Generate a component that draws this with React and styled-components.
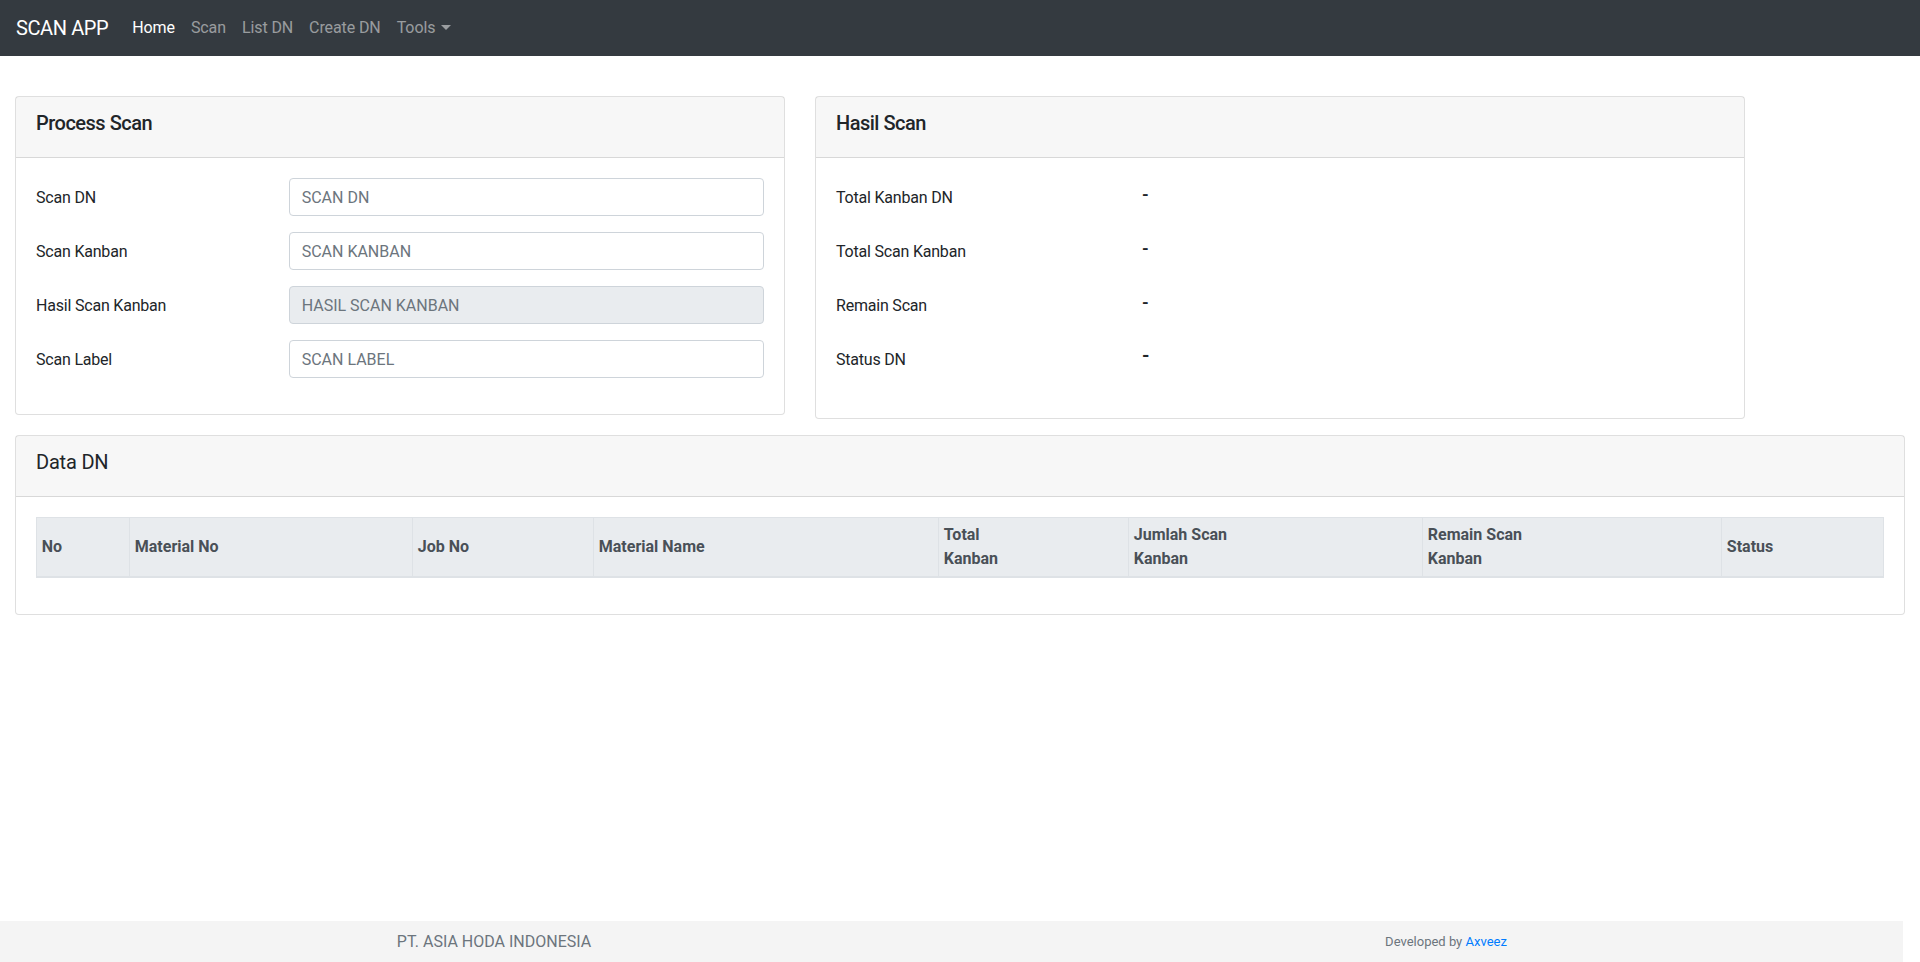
import React from 'react'
import styled, { createGlobalStyle } from 'styled-components'

const GlobalStyle = createGlobalStyle`
    * { box-sizing: border-box; }
    body {
        margin: 0;
        background: #fff;
        color: #212529;
        font-family: "Segoe UI", Roboto, "Helvetica Neue", Arial, "Liberation Sans", sans-serif;
        font-size: 16px;
        line-height: 1.5;
    }
`

const Page = styled.div`
    min-height: 100vh;
    display: flex;
    flex-direction: column;
`

const Navbar = styled.nav`
    height: 56px;
    background: #343a40;
    display: flex;
    align-items: center;
    padding: 0 16px;
`

const Brand = styled.a`
    color: #fff;
    font-size: 20px;
    line-height: 30px;
    letter-spacing: -0.4px;
    margin-right: 16px;
    text-decoration: none;
`

const NavLink = styled.a`
    color: ${p => (p.$active ? '#fff' : 'rgba(255,255,255,.5)')};
    padding: 8px;
    font-size: 16px;
    letter-spacing: -0.1px;
    text-decoration: none;
    display: flex;
    align-items: center;
`

const Caret = styled.span`
    display: inline-block;
    margin-left: 6px;
    border-top: 5px solid rgba(255,255,255,.5);
    border-left: 5px solid transparent;
    border-right: 5px solid transparent;
    margin-top: -2px;
`

const Main = styled.main`
    flex: 1;
    padding: 40px 15px 0;
`

const Grid = styled.div`
    display: grid;
    grid-template-columns: repeat(12, 1fr);
    column-gap: 30px;
    row-gap: 16px;
    align-items: start;
`

const Card = styled.section`
    grid-column: span ${p => p.$span};
    border: 1px solid rgba(0,0,0,.125);
    border-radius: 4px;
    background: #fff;
`

const CardHeader = styled.div`
    background: rgba(0,0,0,.03);
    border-bottom: 1px solid rgba(0,0,0,.125);
    padding: 14px 20px;
`

const CardTitle = styled.h5`
    margin: 0 0 8px;
    font-size: 20px;
    line-height: 1.2;
    letter-spacing: ${p => (p.$weight === 400 ? '-0.2px' : '-0.5px')};
    font-weight: ${p => p.$weight || 500};
    color: #212529;
`

const CardBody = styled.div`
    padding: 20px 20px ${p => p.$bottom || 20}px;
`

const FormRow = styled.div`
    display: grid;
    grid-template-columns: calc((100% + 30px) / 3 - 30px) 1fr;
    column-gap: 30px;
    margin-bottom: 16px;
`

const Label = styled.label`
    padding: 8px 0 6px;
    font-size: 16px;
    line-height: 24px;
    letter-spacing: -0.2px;
    color: #212529;
`

const Input = styled.input`
    height: 38px;
    width: 100%;
    padding: 6px 12px;
    font-family: inherit;
    font-size: 16px;
    line-height: 24px;
    color: #495057;
    background: ${p => (p.disabled ? '#e9ecef' : '#fff')};
    border: 1px solid #ced4da;
    border-radius: 4px;
    outline: none;

    &::placeholder {
        color: #6c757d;
        opacity: 1;
    }
`

const Value = styled.div`
    padding: 4px 0 10px;
    font-size: ${p => (p.$big ? 19 : 17)}px;
    line-height: 24px;
    font-weight: 700;
    color: #212529;
`

const Table = styled.table`
    width: 100%;
    border-collapse: collapse;
    table-layout: fixed;
    margin-bottom: 16px;
`

const Th = styled.th`
    width: ${p => (p.$w ? `${p.$w}px` : 'auto')};
    padding: 4.8px;
    border: 1px solid #dee2e6;
    border-bottom: 2px solid #dee2e6;
    background: #e9ecef;
    color: #495057;
    text-align: left;
    vertical-align: middle;
    font-size: 16px;
    line-height: 24px;
    font-weight: 700;
`

const Footer = styled.footer`
    width: calc(100% - 17px);
    height: 41px;
    background: #f4f4f4;
    display: grid;
    grid-template-columns: 952px 952px;
    padding-left: 18px;
    align-items: center;
    overflow: hidden;
`

const FooterText = styled.div`
    text-align: center;
    color: #6c757d;
    font-size: ${p => p.$size}px;
    line-height: 20px;

    a {
        color: #007bff;
        text-decoration: none;
    }
`

const processFields = [
    { label: 'Scan DN', placeholder: 'SCAN DN' },
    { label: 'Scan Kanban', placeholder: 'SCAN KANBAN' },
    { label: 'Hasil Scan Kanban', placeholder: 'HASIL SCAN KANBAN', disabled: true },
    { label: 'Scan Label', placeholder: 'SCAN LABEL' },
]

const results = ['Total Kanban DN', 'Total Scan Kanban', 'Remain Scan', 'Status DN']

const columns = [
    { title: 'No', w: 93 },
    { title: 'Material No', w: 283 },
    { title: 'Job No', w: 181 },
    { title: 'Material Name', w: 345 },
    { title: ['Total', 'Kanban'], w: 190 },
    { title: ['Jumlah Scan', 'Kanban'], w: 294 },
    { title: ['Remain Scan', 'Kanban'], w: 299 },
    { title: 'Status' },
]

export default function App() {
    return (
        <Page>
            <GlobalStyle />
            <Navbar>
                <Brand href="#">SCAN APP</Brand>
                <NavLink href="#" $active>Home</NavLink>
                <NavLink href="#">Scan</NavLink>
                <NavLink href="#">List DN</NavLink>
                <NavLink href="#">Create DN</NavLink>
                <NavLink href="#">Tools<Caret /></NavLink>
            </Navbar>

            <Main>
                <Grid>
                    <Card $span={5}>
                        <CardHeader>
                            <CardTitle>Process Scan</CardTitle>
                        </CardHeader>
                        <CardBody>
                            {processFields.map(f => (
                                <FormRow key={f.label}>
                                    <Label>{f.label}</Label>
                                    <Input placeholder={f.placeholder} disabled={f.disabled} />
                                </FormRow>
                            ))}
                        </CardBody>
                    </Card>

                    <Card $span={6}>
                        <CardHeader>
                            <CardTitle>Hasil Scan</CardTitle>
                        </CardHeader>
                        <CardBody $bottom={24}>
                            {results.map((r, i) => (
                                <FormRow key={r}>
                                    <Label>{r}</Label>
                                    <Value $big={i === 3}>-</Value>
                                </FormRow>
                            ))}
                        </CardBody>
                    </Card>

                    <Card $span={12}>
                        <CardHeader>
                            <CardTitle $weight={400}>Data DN</CardTitle>
                        </CardHeader>
                        <CardBody>
                            <Table>
                                <thead>
                                    <tr>
                                        {columns.map((c, i) => (
                                            <Th key={i} $w={c.w}>
                                                {Array.isArray(c.title)
                                                    ? <>{c.title[0]}<br />{c.title[1]}</>
                                                    : c.title}
                                            </Th>
                                        ))}
                                    </tr>
                                </thead>
                                <tbody></tbody>
                            </Table>
                        </CardBody>
                    </Card>
                </Grid>
            </Main>

            <Footer>
                <FooterText $size={16}>PT. ASIA HODA INDONESIA</FooterText>
                <FooterText $size={13}>Developed by <a href="#">Axveez</a></FooterText>
            </Footer>
        </Page>
    )
}
